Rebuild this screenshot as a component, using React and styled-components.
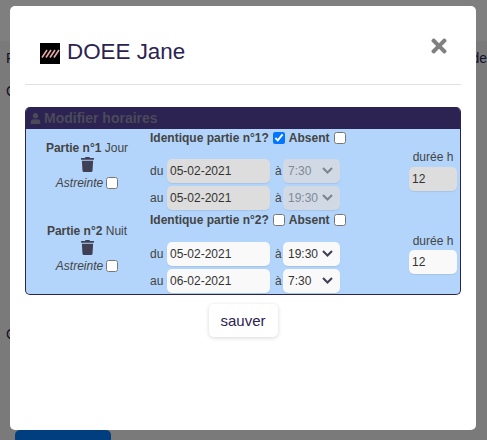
import React from "react";
import styled, { createGlobalStyle } from "styled-components";
import { FaTimes, FaTrash, FaUser } from "react-icons/fa";

const GlobalStyle = createGlobalStyle`
  html, body {
    margin: 0;
    height: 100%;
    overflow: hidden;
    background: #fff;
    font-family: "Liberation Sans", Arial, sans-serif;
    font-size: 12px;
    color: #444;
  }
`;

const Page = styled.div`
  height: 440px;
  padding: 50px 0 0 6px;
  box-sizing: border-box;
  display: flex;
  flex-direction: column;
  font-size: 14px;
  color: #2c2352;
  background: linear-gradient(#fff 41px, #f4f4f4 41px);
`;

const PageLine = styled.div`
  display: flex;
  justify-content: space-between;
  height: 16px;
  margin-bottom: ${(p) => p.$gap || 0}px;
`;

const PageButton = styled.div`
  width: 96px;
  height: 20px;
  margin: auto 0 -10px 9px;
  background: #007dff;
  border-radius: 5px 5px 0 0;
`;

const Backdrop = styled.div`
  position: fixed;
  inset: 0;
  background: rgba(0, 0, 0, 0.5);
  padding: 6px 11px 10px 10px;
  box-sizing: border-box;
`;

const Modal = styled.div`
  height: 424px;
  background: #fff;
  border-radius: 5px;
  padding: 0 15px;
  display: flex;
  flex-direction: column;
`;

const Header = styled.div`
  height: 79px;
  box-sizing: border-box;
  border-bottom: 1px solid #dee2e6;
  display: flex;
  align-items: flex-start;
  justify-content: space-between;
`;

const Title = styled.h5`
  margin: 33px 0 0 15px;
  font-size: 22.4px;
  font-weight: 400;
  line-height: 26px;
  color: #2c2352;
  display: flex;
  align-items: center;
  gap: 7px;
`;

const Logo = styled.svg`
  width: 20px;
  height: 21px;
  margin-top: 3px;
`;

const Close = styled.button`
  border: 0;
  padding: 0;
  margin: 29px 11px 0 0;
  background: none;
  color: #808080;
  font-size: 22px;
  line-height: 0;
`;

const Panel = styled.div`
  margin-top: 22px;
  height: 188px;
  box-sizing: border-box;
  background: #b3d5fb;
  border: 1px solid #2c2352;
  border-top: 0;
  border-radius: 5px;
  overflow: hidden;
`;

const PanelTitle = styled.div`
  height: 22px;
  background: #2c2352;
  color: #4a4a5a;
  font-size: 14px;
  font-weight: 700;
  padding-left: 4px;
  display: flex;
  align-items: center;
  gap: 3px;
`;

const Part = styled.div`
  display: grid;
  grid-template-columns: 124px 258px 50px;
  height: 82px;
`;

const Side = styled.div`
  padding: ${(p) => p.$top}px 2px 0 0;
  display: flex;
  flex-direction: column;
  align-items: center;
`;

const Name = styled.div`
  line-height: 14px;
  font-weight: 400;
  white-space: nowrap;
  b {
    font-weight: 700;
  }
`;

const Trash = styled.div`
  font-size: 15px;
  line-height: 0;
  color: #3f3f55;
  margin: 2px 0 4px;
`;

const Astreinte = styled.label`
  font-style: italic;
  line-height: 14px;
  display: flex;
  align-items: center;
  gap: 3px;
`;

const Check = styled.input.attrs({ type: "checkbox" })`
  width: 12px;
  height: 12px;
  margin: 0;
`;

const Main = styled.div`
  padding-top: 2px;
`;

const Question = styled.div`
  height: 14px;
  line-height: 14px;
  font-weight: 700;
  display: flex;
  align-items: center;
  gap: 4px;
  white-space: nowrap;
  margin-bottom: ${(p) => p.$gap}px;
`;

const TimeRow = styled.div`
  display: flex;
  align-items: center;
  height: 24px;
  margin-bottom: 3px;
`;

const Lab = styled.span`
  width: 17px;
  color: #444;
`;

const A = styled.span`
  width: 8px;
  margin-left: 5px;
  color: #444;
`;

const Field = styled.input`
  width: ${(p) => p.$w}px;
  height: 24px;
  box-sizing: border-box;
  border: 0;
  border-radius: 5px;
  padding: 0 3px;
  font: 12px "Liberation Sans", Arial, sans-serif;
  color: #333;
  background: ${(p) => (p.disabled ? "#dddddd" : "#f9f9f9")};
  box-shadow: 0 1px 1px rgba(0, 0, 0, 0.08);
  opacity: 1;
  &:disabled {
    color: #333;
  }
`;

const SelectBox = styled.div`
  position: relative;
  width: 57px;
  height: 24px;
`;

const Select = styled.select`
  appearance: none;
  width: 100%;
  height: 100%;
  border: 0;
  border-radius: 5px;
  padding: 0 5px;
  font: 12px "Liberation Sans", Arial, sans-serif;
  color: #333;
  background: #f9f9f9;
  box-shadow: 0 1px 1px rgba(0, 0, 0, 0.08);
  &:disabled {
    opacity: 1;
    color: #808a96;
    background: #d1d9e4;
  }
`;

const Chevron = styled.svg`
  position: absolute;
  right: 7px;
  top: 8px;
  width: 11px;
  height: 7px;
  fill: none;
  stroke: ${(p) => (p.$off ? "#7b8490" : "#3f3f55")};
  stroke-width: 2;
  pointer-events: none;
`;

const Duration = styled.div`
  padding-top: ${(p) => p.$top}px;
  display: flex;
  flex-direction: column;
  align-items: center;
  gap: ${(p) => p.$gap}px;
  line-height: 14px;
`;

const SaveRow = styled.div`
  display: flex;
  justify-content: center;
  margin-top: 9px;
`;

const Save = styled.button`
  width: 69px;
  height: 33px;
  border: 0;
  border-radius: 5px;
  background: #fff;
  font: 15px "Liberation Sans", Arial, sans-serif;
  color: #2c2352;
  box-shadow: 0 1px 4px rgba(0, 0, 0, 0.16);
`;

const TimeSelect = ({ value, off }) => (
  <SelectBox>
    <Select disabled={off} defaultValue={value}>
      <option>{value}</option>
    </Select>
    <Chevron $off={off} viewBox="0 0 11 7">
      <path d="M1 1l4.5 4.5L10 1" />
    </Chevron>
  </SelectBox>
);

const PartRow = ({ part, off, sideTop, durTop, durGap, gap }) => (
  <Part>
    <Side $top={sideTop}>
      <Name>
        <b>Partie n°{part.n}</b> {part.label}
      </Name>
      <Trash>
        <FaTrash />
      </Trash>
      <Astreinte>
        Astreinte <Check />
      </Astreinte>
    </Side>
    <Main>
      <Question $gap={gap}>
        Identique partie n°{part.n}? <Check defaultChecked={off} /> Absent <Check />
      </Question>
      <TimeRow>
        <Lab>du</Lab>
        <Field $w={103} disabled={off} defaultValue={part.from} />
        <A>à</A>
        <TimeSelect value={part.start} off={off} />
      </TimeRow>
      <TimeRow>
        <Lab>au</Lab>
        <Field $w={103} disabled={off} defaultValue={part.to} />
        <A>à</A>
        <TimeSelect value={part.end} off={off} />
      </TimeRow>
    </Main>
    <Duration $top={durTop} $gap={durGap}>
      durée h
      <Field $w={48} disabled={off} defaultValue="12" />
    </Duration>
  </Part>
);

const App = () => (
  <>
    <GlobalStyle />
    <Page>
      <PageLine $gap={17}>
        <span>P</span>
        <span>de</span>
      </PageLine>
      <PageLine $gap={227}>C</PageLine>
      <PageLine>C</PageLine>
      <PageButton />
    </Page>
    <Backdrop>
      <Modal>
        <Header>
          <Title>
            <Logo viewBox="0 0 20 21">
              <rect width="20" height="21" fill="#000" />
              <path d="M2 14.5L7 7M6 14.5L11 7M10 14.5L15 7M14 14.5L19 7" stroke="#e8a8a8" strokeWidth="1.6" />
            </Logo>
            DOEE Jane
          </Title>
          <Close>
            <FaTimes />
          </Close>
        </Header>
        <Panel>
          <PanelTitle>
            <FaUser size={11} /> Modifier horaires
          </PanelTitle>
          <PartRow
            part={{ n: 1, label: "Jour", from: "05-02-2021", to: "05-02-2021", start: "7:30", end: "19:30" }}
            off
            sideTop={12}
            durTop={21}
            durGap={3}
            gap={14}
          />
          <PartRow
            part={{ n: 2, label: "Nuit", from: "05-02-2021", to: "06-02-2021", start: "19:30", end: "7:30" }}
            sideTop={13}
            durTop={23}
            durGap={2}
            gap={15}
          />
        </Panel>
        <SaveRow>
          <Save>sauver</Save>
        </SaveRow>
      </Modal>
    </Backdrop>
  </>
);

export default App;
